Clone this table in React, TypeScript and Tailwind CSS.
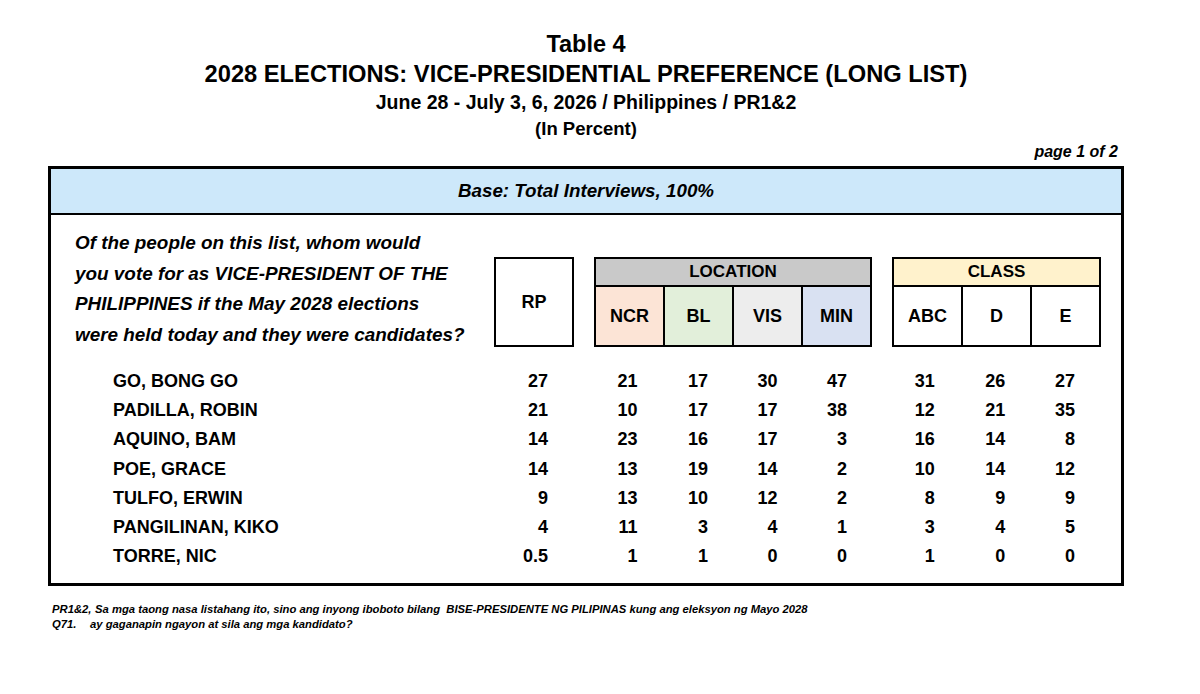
import React from "react";

const rows: string[][] = [
  ["GO, BONG GO", "27", "21", "17", "30", "47", "31", "26", "27"],
  ["PADILLA, ROBIN", "21", "10", "17", "17", "38", "12", "21", "35"],
  ["AQUINO, BAM", "14", "23", "16", "17", "3", "16", "14", "8"],
  ["POE, GRACE", "14", "13", "19", "14", "2", "10", "14", "12"],
  ["TULFO, ERWIN", "9", "13", "10", "12", "2", "8", "9", "9"],
  ["PANGILINAN, KIKO", "4", "11", "3", "4", "1", "3", "4", "5"],
  ["TORRE, NIC", "0.5", "1", "1", "0", "0", "1", "0", "0"],
];

export default function App() {
  return (
    <div className="w-[1200px] h-[694px] bg-white text-black font-['Liberation_Sans',Arial,sans-serif] font-bold overflow-hidden">
      {/* Titles */}
      <div className="pt-[29px] pl-[48px] w-[1124px] text-center">
        <div className="text-[23.5px] leading-[30px]">Table 4</div>
        <div className="text-[23.7px] leading-[30px] whitespace-nowrap">
          2028 ELECTIONS: VICE-PRESIDENTIAL PREFERENCE (LONG LIST)
        </div>
        <div className="text-[19.5px] leading-[26px] whitespace-nowrap">
          June 28 - July 3, 6, 2026 / Philippines / PR1&amp;2
        </div>
        <div className="text-[18.5px] leading-[28px]">(In Percent)</div>
      </div>
      <div className="w-[1118px] text-right italic text-[16px] leading-[18px]">page 1 of 2</div>

      {/* Main box */}
      <div className="mt-[5px] ml-[48px] w-[1076px] border-[3px] border-black">
        <div className="h-[46px] bg-[#cde8fa] border-b-2 border-black flex items-center justify-center italic text-[18.8px]">
          Base: Total Interviews, 100%
        </div>
        <div className="pt-[13px] pb-[12px]">
          <div className="flex items-start">
            <div className="w-[443px] pl-[24px] italic text-[18.9px] leading-[30.5px] whitespace-nowrap">
              <div>Of the people on this list, whom would</div>
              <div>you vote for as VICE-PRESIDENT OF THE</div>
              <div>PHILIPPINES if the May 2028 elections</div>
              <div>were held today and they were candidates?</div>
            </div>
            <div className="mt-[29px] flex">
              <div className="w-[80px] h-[90px] border-2 border-black flex items-center justify-center text-[18px]">
                RP
              </div>
              <div className="ml-[20px] w-[278px] h-[90px] border-2 border-black flex flex-col">
                <div className="h-[28px] bg-[#c9c9c9] border-b-2 border-black flex items-center justify-center text-[17px]">
                  LOCATION
                </div>
                <div className="flex-1 flex text-[18px]">
                  <div className="flex-1 bg-[#fce4d6] flex items-center justify-center">NCR</div>
                  <div className="flex-1 bg-[#e2efda] border-l-2 border-black flex items-center justify-center">BL</div>
                  <div className="flex-1 bg-[#ededed] border-l-2 border-black flex items-center justify-center">VIS</div>
                  <div className="flex-1 bg-[#d9e1f2] border-l-2 border-black flex items-center justify-center">MIN</div>
                </div>
              </div>
              <div className="ml-[20px] w-[209px] h-[90px] border-2 border-black flex flex-col">
                <div className="h-[28px] bg-[#fff2cc] border-b-2 border-black flex items-center justify-center text-[17px]">
                  CLASS
                </div>
                <div className="flex-1 flex text-[18px]">
                  <div className="flex-1 flex items-center justify-center">ABC</div>
                  <div className="flex-1 border-l-2 border-black flex items-center justify-center">D</div>
                  <div className="flex-1 border-l-2 border-black flex items-center justify-center">E</div>
                </div>
              </div>
            </div>
          </div>

          <div className="mt-[17px] text-[18px]">
            {rows.map((r) => (
              <div key={r[0]} className="h-[29.2px] flex items-center">
                <div className="w-[443px] pl-[62px] whitespace-nowrap">{r[0]}</div>
                <div className="w-[80px] pr-[26px] text-right">{r[1]}</div>
                <div className="w-[20px]" />
                <div className="w-[69.5px] pr-[26px] text-right">{r[2]}</div>
                <div className="w-[69.5px] pr-[25px] text-right">{r[3]}</div>
                <div className="w-[69.5px] pr-[25px] text-right">{r[4]}</div>
                <div className="w-[69.5px] pr-[25px] text-right">{r[5]}</div>
                <div className="w-[20px]" />
                <div className="w-[69.67px] pr-[27px] text-right">{r[6]}</div>
                <div className="w-[69.67px] pr-[26px] text-right">{r[7]}</div>
                <div className="w-[69.67px] pr-[26px] text-right">{r[8]}</div>
              </div>
            ))}
          </div>
        </div>
      </div>

      {/* Footnote */}
      <div className="mt-[16px] ml-[52px] italic text-[11.25px] leading-[15px] whitespace-pre">
        <div className="flex">
          <span className="w-[43px]">PR1&amp;2,</span>
          <span>Sa mga taong nasa listahang ito, sino ang inyong iboboto bilang  BISE-PRESIDENTE NG PILIPINAS kung ang eleksyon ng Mayo 2028</span>
        </div>
        <div className="flex">
          <span className="w-[38px]">Q71.</span>
          <span>ay gaganapin ngayon at sila ang mga kandidato?</span>
        </div>
      </div>
    </div>
  );
}
